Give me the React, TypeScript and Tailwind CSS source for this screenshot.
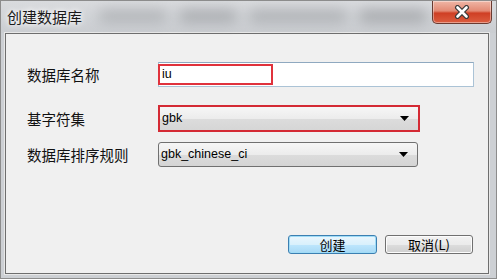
import React from "react";

const cjk = { fontFamily: '"Noto Sans CJK SC", "Noto Sans", sans-serif' };
const latin = { fontFamily: '"Liberation Sans", Arial, sans-serif' };

function Arrow() {
  return (
    <svg width="9" height="5" viewBox="0 0 9 5" className="shrink-0">
      <path d="M0 0 H9 L4.5 5 Z" fill="#000" />
    </svg>
  );
}

export default function App() {
  return (
    <div className="w-[497px] h-[279px] bg-[#cdd0d4] border border-[#8c8c8c] flex flex-col overflow-hidden">
      {/* title bar */}
      <div className="h-[32px] flex items-start bg-[linear-gradient(180deg,#d9dbde_0%,#cacdd1_100%)]">
        <div
          className="pl-[6px] pt-[6px] text-[15px] leading-[20px] text-[#1a1a1a] [text-shadow:0_0_5px_#ffffff,0_0_8px_#ffffff]"
          style={cjk}
        >
          创建数据库
        </div>
        <div className="flex-1 h-[30px] flex items-center gap-[10px] pl-[16px] opacity-40">
          <div className="w-[70px] h-[12px] rounded-full bg-[#7c7e82] blur-[7px]" />
          <div className="w-[60px] h-[12px] rounded-full bg-[#66686c] blur-[7px]" />
          <div className="w-[100px] h-[12px] rounded-full bg-[#74767a] blur-[7px]" />
          <div className="w-[70px] h-[12px] rounded-full bg-[#5e6064] blur-[7px]" />
        </div>
        <div className="w-[60px] h-[23px] mr-[4px] rounded-b-[5px] border border-t-0 border-[#6a3a30] bg-[linear-gradient(180deg,#efb6a6_0%,#e38a74_45%,#cf3f24_55%,#dc5e40_100%)] flex items-center justify-center shadow-[inset_0_0_0_1px_rgba(255,255,255,0.4)]">
          <svg width="16" height="14" viewBox="0 0 16 14">
            <path d="M3.5 2.5 L12.5 11.5 M12.5 2.5 L3.5 11.5" stroke="#3a3a3a" strokeWidth="5" strokeLinecap="round" />
            <path d="M3.5 2.5 L12.5 11.5 M12.5 2.5 L3.5 11.5" stroke="#ffffff" strokeWidth="2.6" strokeLinecap="round" />
          </svg>
        </div>
      </div>

      {/* client area */}
      <div className="flex-1 ml-[4px] mr-[7px] mb-[4px] border border-[#6e6e6e] bg-[#f0f0f0] flex flex-col shadow-[0_0_0_1px_#e8e8e8]">
        <div className="flex flex-col pl-[21px] pt-[28px]">
          {/* row 1 */}
          <div className="flex items-center h-[25px]">
            <div className="w-[131px] text-[14.5px] text-[#111]" style={cjk}>
              数据库名称
            </div>
            <div className="relative w-[316px] h-[25px] bg-white border border-[#abc3d6] border-t-[#8fa9c0]">
              <div className="absolute left-[-1px] top-[1px] w-[115px] h-[21px] border-2 border-[#e0323c] flex items-center pl-[2px]">
                <span className="text-[12.5px] text-black" style={latin}>
                  iu
                </span>
              </div>
            </div>
          </div>

          {/* row 2 */}
          <div className="flex items-center h-[27px] mt-[18px]">
            <div className="w-[131px] text-[14.5px] text-[#111]" style={cjk}>
              基字符集
            </div>
            <div className="w-[262px] h-[27px] border-2 border-[#d42a34] flex">
              <div className="flex-1 flex items-center justify-between pl-[2px] pr-[9px] bg-[linear-gradient(180deg,#f6f6f6_0%,#ececec_50%,#dcdcdc_51%,#d6d6d6_100%)]">
                <span className="text-[12.5px] text-black" style={latin}>
                  gbk
                </span>
                <Arrow />
              </div>
            </div>
          </div>

          {/* row 3 */}
          <div className="flex items-center h-[25px] mt-[10px]">
            <div className="w-[131px] text-[14.5px] text-[#111]" style={cjk}>
              数据库排序规则
            </div>
            <div className="w-[260px] h-[25px] border border-[#707070] rounded-[3px] flex items-center justify-between pl-[2px] pr-[9px] bg-[linear-gradient(180deg,#f6f6f6_0%,#ececec_50%,#dcdcdc_51%,#d4d4d4_100%)]">
              <span className="text-[12.5px] text-black" style={latin}>
                gbk_chinese_ci
              </span>
              <Arrow />
            </div>
          </div>
        </div>

        {/* buttons */}
        <div className="mt-auto mb-[19px] pr-[15px] flex justify-end gap-[8px]">
          <div
            className="w-[89px] h-[19px] rounded-[3px] border border-[#3c7fb1] shadow-[inset_0_0_0_1px_#9fdcf7] bg-[linear-gradient(180deg,#eaf6fd_0%,#d9f0fc_50%,#bee6fd_51%,#a7d9f5_100%)] flex items-center justify-center text-[13px] leading-none text-black"
            style={cjk}
          >
            创建
          </div>
          <div
            className="w-[88px] h-[19px] rounded-[3px] border border-[#707070] shadow-[inset_0_0_0_1px_#fcfcfc] bg-[linear-gradient(180deg,#f2f2f2_0%,#ebebeb_50%,#dddddd_51%,#cfcfcf_100%)] flex items-center justify-center text-[13px] leading-none text-black"
            style={cjk}
          >
            取消(L)
          </div>
        </div>
      </div>
    </div>
  );
}
